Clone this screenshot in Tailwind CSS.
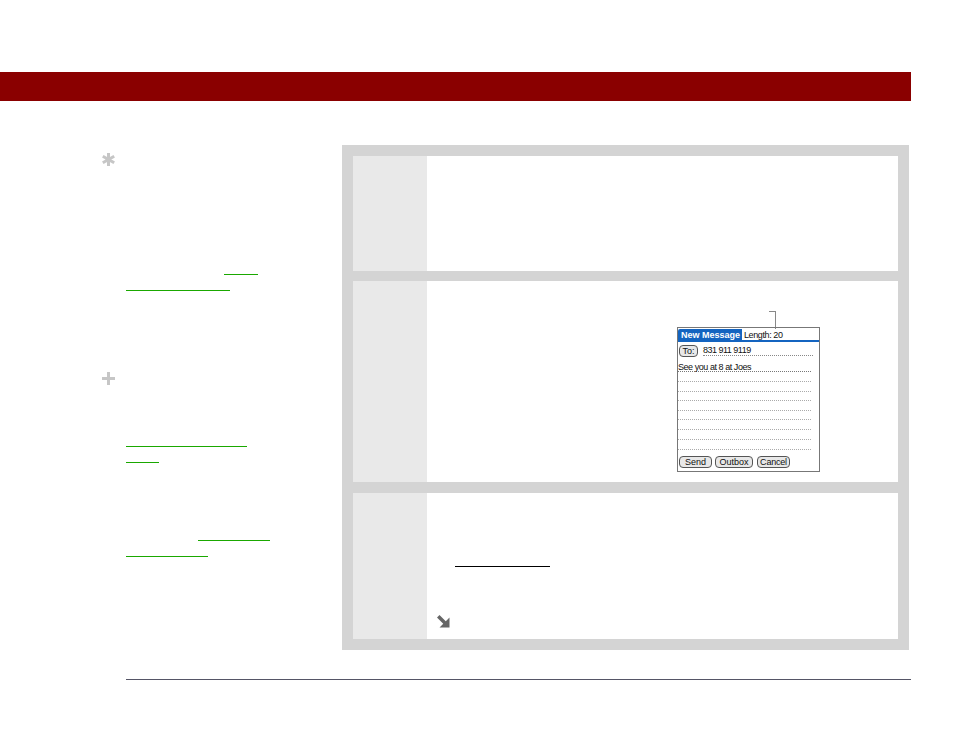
<!DOCTYPE html>
<html lang="en">

<head>
    <meta charset="UTF-8">
    <title>New Message</title>
    <script src="https://cdn.jsdelivr.net/npm/@tailwindcss/browser@4"></script>
</head>

<body class="bg-white font-['Liberation_Sans',sans-serif]">
    <div class="w-[954px] h-[737px] overflow-hidden pt-[72px]">

        <!-- title bar -->
        <div class="w-[911px] h-[29px] bg-[#8a0000]"></div>

        <div class="flex mt-[44px] h-[505px]">

            <!-- sidebar -->
            <div class="w-[342px] pl-[102px]">
                <svg class="mt-[8px]" width="13" height="13" viewBox="0 0 13 13" stroke="#c6c6c6" stroke-width="3">
                    <path d="M6.500 0V13M0.800 3.200L12.200 9.800M12.200 3.200L0.800 9.800" />
                </svg>
                <div class="mt-[108px] ml-[122px] w-[34px] h-px bg-[#1aa800]"></div>
                <div class="mt-[15px] ml-[24px] w-[104px] h-px bg-[#1aa800]"></div>

                <svg class="mt-[81px]" width="13" height="13" viewBox="0 0 13 13" fill="#c6c6c6">
                    <path d="M5 0H8V5H13V8H8V13H5V8H0V5H5Z" />
                </svg>
                <div class="mt-[61px] ml-[24px] w-[121px] h-px bg-[#1aa800]"></div>
                <div class="mt-[15px] ml-[24px] w-[33px] h-px bg-[#1aa800]"></div>
                <div class="mt-[77px] ml-[96px] w-[72px] h-px bg-[#1aa800]"></div>
                <div class="mt-[15px] ml-[24px] w-[82px] h-px bg-[#1aa800]"></div>
            </div>

            <!-- steps -->
            <div class="w-[567px] h-[505px] bg-[#d4d4d4] p-[11px] flex flex-col">

                <div class="flex h-[115px] mb-[10px]">
                    <div class="w-[74px] bg-[#e9e9e9]"></div>
                    <div class="flex-1 bg-white"></div>
                </div>

                <div class="flex h-[201px] mb-[11px]">
                    <div class="w-[74px] bg-[#e9e9e9]"></div>
                    <div class="flex-1 bg-white relative">
                        <!-- callout line -->
                        <div class="absolute left-[342px] top-[30px] w-[7px] h-[18px] border-t border-r border-[#888888]"></div>

                        <!-- phone screen -->
                        <div class="absolute left-[250px] top-[46px] w-[143px] h-[145px] border border-[#777777] text-[9px] leading-[10px] text-[#111111] pt-px">
                            <div class="flex h-[13px] border-b-2 border-[#1464c0]">
                                <div class="bg-[#1464c0] text-white font-bold px-[3px] w-[64px] whitespace-nowrap pt-px rounded-tl-[2px]">New Message</div>
                                <div class="pl-[2px] pt-px tracking-[-0.4px]">Length: 20</div>
                            </div>

                            <div class="flex mt-[3px] ml-px h-[12px]">
                                <div class="w-[19px] h-[12px] rounded-[4px] border border-[#555555] bg-[#e8e8e8] text-center">To:</div>
                                <div class="ml-[5px] w-[110px] h-[11px] border-b border-dotted border-[#888888] whitespace-nowrap tracking-[-0.5px]">831 911 9119</div>
                            </div>

                            <div class="mt-[5px] w-[133px] h-[10px] border-b border-dotted border-[#777777] whitespace-nowrap tracking-[-0.45px]">See you at 8 at Joes</div>
                            <div class="w-[133px] h-[10px] border-b border-dotted border-[#aaaaaa]"></div>
                            <div class="w-[133px] h-[10px] border-b border-dotted border-[#aaaaaa]"></div>
                            <div class="w-[133px] h-[9px] border-b border-dotted border-[#aaaaaa]"></div>
                            <div class="w-[133px] h-[10px] border-b border-dotted border-[#aaaaaa]"></div>
                            <div class="w-[133px] h-[9px] border-b border-dotted border-[#aaaaaa]"></div>
                            <div class="w-[133px] h-[10px] border-b border-dotted border-[#aaaaaa]"></div>
                            <div class="w-[133px] h-[10px] border-b border-dotted border-[#aaaaaa]"></div>
                            <div class="w-[133px] h-[10px] border-b border-dotted border-[#aaaaaa]"></div>

                            <div class="flex ml-px mt-[6px] text-center">
                                <div class="w-[33px] h-[12px] rounded-[4px] border border-[#555555] bg-[#e8e8e8]">Send</div>
                                <div class="w-[38px] h-[12px] ml-[3px] rounded-[4px] border border-[#555555] bg-[#e8e8e8]">Outbox</div>
                                <div class="w-[33px] h-[12px] ml-[4px] rounded-[4px] border border-[#555555] bg-[#e8e8e8] tracking-[-0.2px]">Cancel</div>
                            </div>
                        </div>
                    </div>
                </div>

                <div class="flex h-[146px]">
                    <div class="w-[74px] bg-[#e9e9e9]"></div>
                    <div class="flex-1 bg-white pl-[28px] pt-[73px]">
                        <div class="w-[95px] h-px bg-black"></div>
                        <svg class="mt-[48px] -ml-[18px]" width="13" height="13" viewBox="0 0 13 13" fill="#666666">
                            <path d="M2.500 0L0 2.500L6.250 8.750L2.500 12.500H12.500V2.500L8.750 6.250Z" />
                        </svg>
                    </div>
                </div>
            </div>
        </div>

        <!-- footer rule -->
        <div class="ml-[126px] mt-[29px] w-[785px] h-px bg-[#555566]"></div>
    </div>
</body>

</html>
